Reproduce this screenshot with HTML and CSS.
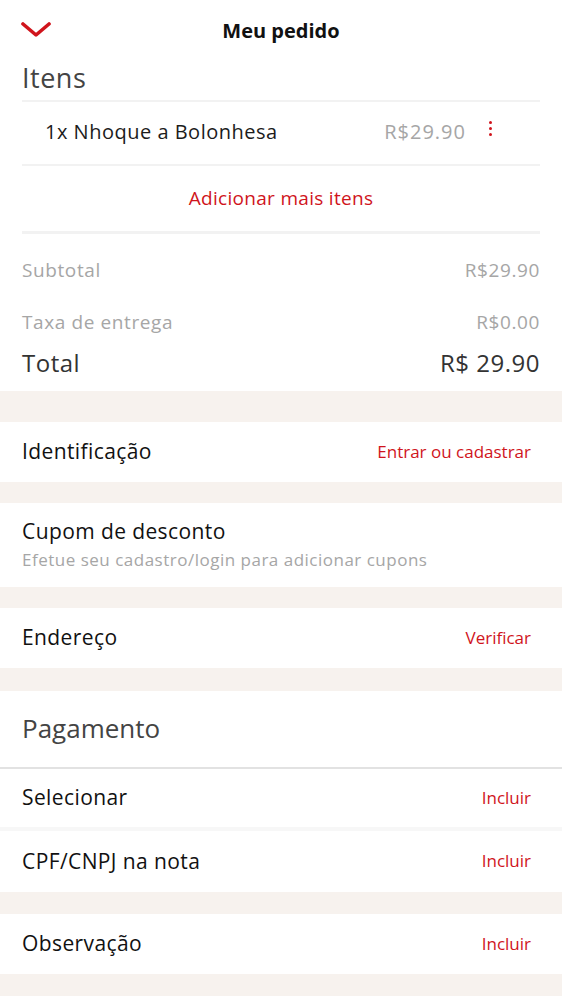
FILE: index.html
```html
<!DOCTYPE html>
<html lang="pt-BR">
  <head>
    <meta charset="UTF-8" />
    <meta name="viewport" content="width=device-width, initial-scale=1.0" />
    <title>Meu pedido</title>
    <link rel="stylesheet" href="styles.css">
  </head>
  <body>
    <div class="page">
      <header class="topbar">
        <button type="button" class="back-button" aria-label="Fechar">
          <svg width="30" height="16" viewBox="0 0 30 16">
            <path d="M2 2 L15 13 L28 2" fill="none" stroke="#d0141c" stroke-width="3.6" stroke-linecap="round" stroke-linejoin="round" />
          </svg>
        </button>
        <h1 class="topbar-title">Meu pedido</h1>
      </header>

      <section class="summary">
        <h2 class="section-title">Itens</h2>
        <div class="item-row">
          <span class="item-name">1x Nhoque a Bolonhesa</span>
          <span class="item-price">R$29.90</span>
          <button type="button" class="kebab" aria-label="Opções">
            <span></span><span></span><span></span>
          </button>
        </div>
        <a href="#" class="add-more">Adicionar mais itens</a>
        <div class="totals">
          <div class="total-line muted">
            <span>Subtotal</span><span>R$29.90</span>
          </div>
          <div class="total-line muted">
            <span>Taxa de entrega</span><span>R$0.00</span>
          </div>
          <div class="total-line grand">
            <span>Total</span><span>R$ 29.90</span>
          </div>
        </div>
      </section>

      <div class="gap gap-lg"></div>

      <div class="row">
        <span class="row-label">Identificação</span>
        <a href="#" class="row-link">Entrar ou cadastrar</a>
      </div>

      <div class="gap"></div>

      <div class="row row-stack">
        <span class="row-label">Cupom de desconto</span>
        <span class="row-hint">Efetue seu cadastro/login para adicionar cupons</span>
      </div>

      <div class="gap"></div>

      <div class="row">
        <span class="row-label">Endereço</span>
        <a href="#" class="row-link">Verificar</a>
      </div>

      <div class="gap gap-md"></div>

      <div class="payment-head">
        <h2 class="section-title">Pagamento</h2>
      </div>
      <div class="row row-sm">
        <span class="row-label">Selecionar</span>
        <a href="#" class="row-link">Incluir</a>
      </div>
      <div class="gap gap-thin"></div>
      <div class="row">
        <span class="row-label">CPF/CNPJ na nota</span>
        <a href="#" class="row-link">Incluir</a>
      </div>

      <div class="gap"></div>

      <div class="row">
        <span class="row-label">Observação</span>
        <a href="#" class="row-link">Incluir</a>
      </div>

      <div class="gap gap-end"></div>
    </div>
  </body>
</html>
```

FILE: styles.css
```css
/* Reset */
* {
  margin: 0;
  padding: 0;
  box-sizing: border-box;
}
body {
  font-family: "Open Sans", Lato, Arial, sans-serif;
  background: #fff;
  color: #1c1c1c;
}
a {
  text-decoration: none;
}
button {
  background: none;
  border: none;
  cursor: pointer;
}
.page {
  width: 100%;
  min-height: 100vh;
  background: #fff;
}
.topbar {
  position: relative;
  height: 60px;
  display: flex;
  align-items: center;
  justify-content: center;
}
.back-button {
  position: absolute;
  left: 21px;
  top: 22px;
  display: flex;
}
.topbar-title {
  font-size: 20px;
  font-weight: 700;
  color: #111;
  margin-top: 1px;
}
.summary {
  padding: 0 22px 11px;
}
.section-title {
  font-size: 26px;
  font-weight: 400;
  color: #444;
  line-height: 36px;
}
.summary .section-title {
  font-size: 27px;
  letter-spacing: 0.5px;
  padding-bottom: 4px;
}
.item-row {
  display: flex;
  align-items: center;
  height: 66px;
  padding: 0 26px 4px 23px;
  border-top: 2px solid #f2f2f2;
  border-bottom: 2px solid #f2f2f2;
}
.item-name {
  flex: 1;
  font-size: 20px;
  letter-spacing: 0.5px;
  color: #1c1c1c;
}
.item-price {
  font-size: 20px;
  letter-spacing: 1px;
  color: #a6a6a6;
}
.kebab {
  width: 48px;
  display: flex;
  flex-direction: column;
  align-items: center;
  gap: 3px;
  margin-top: -6px;
}
.kebab span {
  width: 3px;
  height: 3px;
  border-radius: 50%;
  background: #d0141c;
}
.add-more {
  display: block;
  text-align: center;
  font-size: 19px;
  letter-spacing: 0.3px;
  color: #d0141c;
  height: 68px;
  line-height: 64px;
  border-bottom: 3px solid #f2f2f2;
}
.totals {
  padding-top: 18px;
}
.total-line {
  display: flex;
  justify-content: space-between;
  align-items: center;
}
.total-line.muted {
  font-size: 19px;
  letter-spacing: 0.6px;
  color: #a6a6a6;
  height: 36px;
  margin-bottom: 16px;
}
.total-line.muted + .total-line.muted {
  margin-bottom: 4px;
}
.total-line.grand {
  font-size: 24px;
  letter-spacing: 0.5px;
  color: #333;
  height: 36px;
}
.gap {
  height: 21px;
  background: #f7f2ee;
}
.gap-lg {
  height: 31px;
}
.gap-md {
  height: 23px;
}
.gap-thin {
  height: 4px;
  background: #f7f7f7;
}
.gap-end {
  height: 22px;
}
.row {
  display: flex;
  align-items: center;
  justify-content: space-between;
  height: 60px;
  padding: 0 31px 2px 22px;
}
.row-sm {
  height: 58px;
}
.row-stack {
  flex-direction: column;
  align-items: flex-start;
  justify-content: center;
  height: 84px;
  gap: 3px;
}
.row-label {
  font-size: 21px;
  letter-spacing: 0.4px;
  color: #111;
}
.row-hint {
  font-size: 17px;
  letter-spacing: 0.5px;
  color: #a6a6a6;
}
.row-link {
  font-size: 17px;
  color: #d0141c;
}
.payment-head {
  display: flex;
  align-items: center;
  height: 78px;
  padding: 0 22px 3px;
  border-bottom: 2px solid #e2e2e2;
}
.row-sm + .gap-thin + .row {
  height: 61px;
}
.row-sm + .gap-thin + .row + .gap {
  height: 22px;
}
```
